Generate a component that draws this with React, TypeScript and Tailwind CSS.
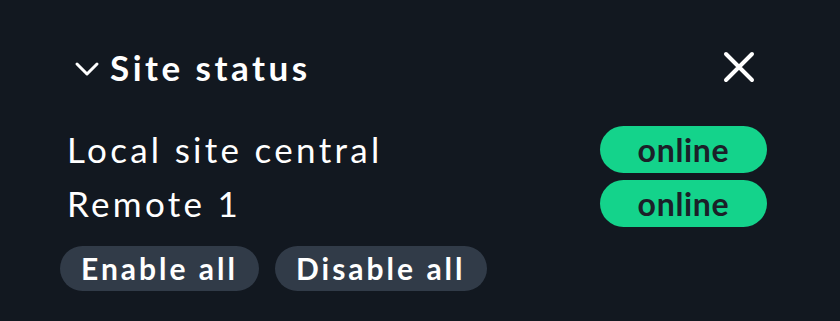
export default function App() {
    return (
        <div className="w-[840px] h-[321px] bg-[#121820] text-white font-['Lato',sans-serif] pl-[60px] pr-[73px] pt-[44px]">
            <div className="flex items-center justify-between h-[46px]">
                <div className="flex items-center">
                    <svg width="26" height="18" viewBox="0 0 26 18" className="ml-[14px] mr-[10px] mt-[4px]">
                        <path d="M3 4 L13 14 L23 4" fill="none" stroke="white" strokeWidth="3" strokeLinecap="round" strokeLinejoin="round" />
                    </svg>
                    <span className="text-[35px] font-bold tracking-[3.5px] leading-none">Site status</span>
                </div>
                <svg width="34" height="34" viewBox="0 0 34 34" className="mr-[11px]">
                    <path d="M4 4 L30 30 M30 4 L4 30" stroke="white" strokeWidth="4" strokeLinecap="round" />
                </svg>
            </div>
            <div className="mt-[36px] flex flex-col gap-[7px]">
                {["Local site central", "Remote 1"].map((name) => (
                    <div key={name} className="flex items-center justify-between h-[47px] pl-[7px]">
                        <span className="text-[35px] tracking-[3.3px] leading-none">{name}</span>
                        <span className="w-[167px] h-[47px] rounded-full bg-[#14d38b] text-[#1b2028] text-[32px] font-bold tracking-[0.7px] flex items-center justify-center">
                            online
                        </span>
                    </div>
                ))}
            </div>
            <div className="mt-[19px] flex gap-[16px]">
                <button className="h-[45px] pl-[21px] pr-[21px] rounded-full bg-[#313b48] text-[30px] font-bold tracking-[3px] text-white">
                    Enable all
                </button>
                <button className="h-[45px] pl-[21px] pr-[21px] rounded-full bg-[#313b48] text-[30px] font-bold tracking-[3px] text-white">
                    Disable all
                </button>
            </div>
        </div>
    );
}
